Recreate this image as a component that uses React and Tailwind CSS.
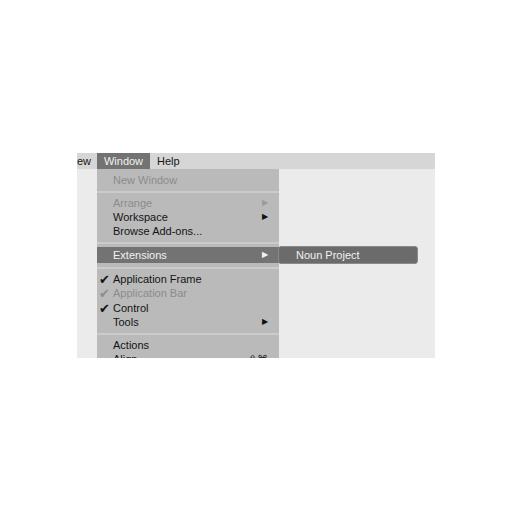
import React from "react";

// one row of the Window dropdown
function Item({ label, check, disabled, arrow, shortcut }) {
  return (
    <div
      className={
        "relative flex h-[14px] items-center pl-[16px] pr-[11px] " +
        (disabled ? "text-[#8c8c8c]" : "text-[#141414]")
      }
    >
      {check && (
        <span className="absolute left-[2px] text-[13px] leading-none" style={{ fontFamily: '"DejaVu Sans", sans-serif' }}>
          ✔
        </span>
      )}
      <span className="flex-1">{label}</span>
      {arrow && (
        <span className={"text-[8px] " + (disabled ? "text-[#9a9a9a]" : "text-[#111]")}>▶</span>
      )}
      {shortcut && <span className="text-[11px] text-[#222]">{shortcut}</span>}
    </div>
  );
}

function Sep() {
  return (
    <div className="flex h-[9px] items-center">
      <div className="h-[2px] w-full bg-[#cbcbcb]" />
    </div>
  );
}

export default function App() {
  return (
    <div
      className="h-[512px] w-[512px] bg-white pt-[153px] pl-[77px]"
      style={{ fontFamily: '"Liberation Sans", Arial, sans-serif' }}
    >
      <div className="relative h-[205px] w-[358px] overflow-hidden bg-[#ebebeb] text-[11px]">
        {/* menu bar */}
        <div className="flex h-[16px] items-center bg-[#d6d6d6] text-[#151515]">
          <div className="w-[20px] overflow-hidden whitespace-nowrap">ew</div>
          <div className="flex h-full w-[53px] items-center justify-center bg-[#737373] text-[#f2f2f2]">
            Window
          </div>
          <div className="pl-[7px]">Help</div>
        </div>

        {/* dropdown */}
        <div className="ml-[20px] h-[189px] w-[182px] bg-[#bababa] pt-[4px]">
          <Item label="New Window" disabled />
          <Sep />
          <Item label="Arrange" disabled arrow />
          <Item label="Workspace" arrow />
          <Item label="Browse Add-ons..." />
          <Sep />
          <div className="flex h-[16px] items-center bg-[#737373] pl-[16px] pr-[11px] text-[#f2f2f2]">
            <span className="flex-1">Extensions</span>
            <span className="text-[8px]">▶</span>
          </div>
          <Sep />
          <Item label="Application Frame" check />
          <Item label="Application Bar" check disabled />
          <div className="h-[1px]" />
          <Item label="Control" check />
          <Item label="Tools" arrow />
          <Sep />
          <Item label="Actions" />
          <Item label="Align" shortcut="⇧⌘" />
        </div>

        {/* submenu */}
        <div className="absolute left-[201px] top-[93px] flex h-[18px] w-[140px] items-center rounded-[3px] border border-[#8a8a8a] bg-[#6b6b6b] pl-[17px] text-[#f2f2f2]">
          Noun Project
        </div>
      </div>
    </div>
  );
}
